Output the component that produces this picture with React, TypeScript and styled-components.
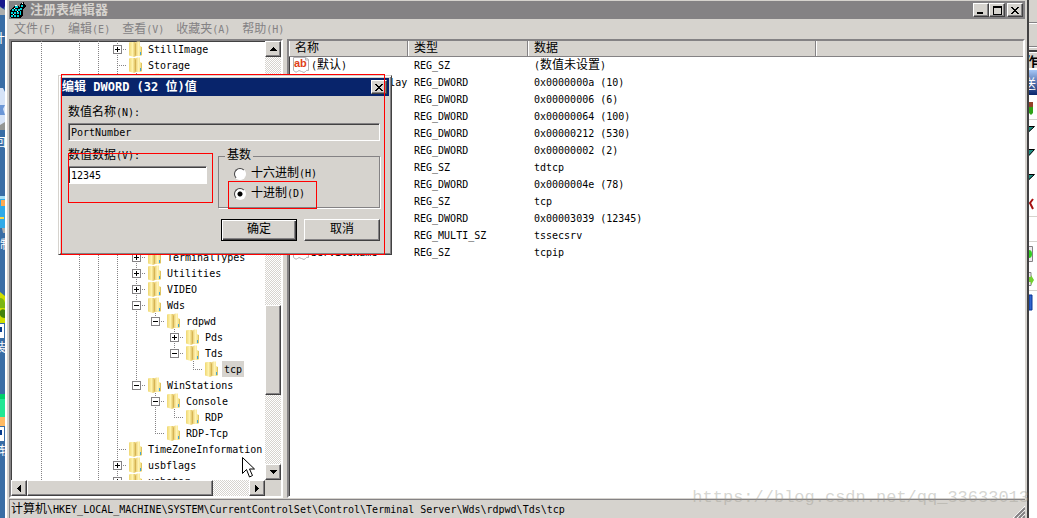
import React, { useState } from 'react';
import styled, { createGlobalStyle, css } from 'styled-components';

const face = '#d6d3ce';
const shade = '#848284';
const dark = '#424142';
const navy = '#08246b';
const mark = '#ff0000';

const GlobalStyle = createGlobalStyle`
  * { box-sizing: border-box; }
  body {
    margin: 0;
    background: ${face};
    color: #000;
    font-family: "DejaVu Sans Mono", "Noto Sans CJK SC", monospace;
    font-size: 10px;
    line-height: 16px;
    overflow: hidden;
  }
  button, input { font: inherit; color: inherit; margin: 0; border-radius: 0; }
`;

const Han = styled.span`
  font-family: "Noto Sans CJK SC", sans-serif;
  font-size: 12px;
  line-height: 1;
`;

/* Chinese runs are set at 12px beside half-width 6px Latin cells. */
function Mixed({ text }: { text: string }) {
  return (
    <>
      {text.split(/([\u4e00-\u9fff]+)/).map((part, i) =>
        i % 2 ? <Han key={i}>{part}</Han> : <React.Fragment key={i}>{part}</React.Fragment>,
      )}
    </>
  );
}

const raised = css`
  background: ${face};
  border: 1px solid;
  border-color: #fff ${dark} ${dark} #fff;
  box-shadow: inset -1px -1px 0 ${shade};
`;

const sunken = css`
  border: 2px solid;
  border-color: ${shade} #fff #fff ${shade};
  box-shadow: inset 1px 1px 0 ${dark};
`;

const Screen = styled.div`
  display: flex;
  height: 100vh;
  position: relative;
  overflow: hidden;
`;

const Strip = styled.div<{ $width: number; $color: string }>`
  flex: 0 0 ${p => p.$width}px;
  background: ${p => p.$color};
  overflow: hidden;
  svg { display: block; }
`;

const Window = styled.main`
  flex: 1;
  min-width: 0;
  display: flex;
  flex-direction: column;
  background: ${face};
  border-left: 2px solid #fff;
  border-right: 2px solid ${dark};
  padding: 1px 2px 0 2px;
`;

const TitleBar = styled.header`
  display: flex;
  align-items: center;
  flex: 0 0 18px;
  gap: 4px;
  padding: 0 2px 0 1px;
  background: ${shade};
  color: ${face};
`;

const Title = styled.h1`
  flex: 1;
  margin: 0;
  font-size: 12px;
  font-weight: 700;
  line-height: 18px;
  span { font-size: 13px; }
`;

const WindowButtons = styled.div`
  display: flex;
`;

const CaptionButton = styled.button<{ $gap?: boolean }>`
  ${raised}
  display: grid;
  place-items: center;
  width: 16px;
  height: 14px;
  padding: 0;
  margin-left: ${p => (p.$gap ? 2 : 0)}px;
`;

const MenuBar = styled.nav`
  display: flex;
  align-items: center;
  flex: 0 0 20px;
  gap: 12px;
  padding: 2px 0 0 5px;
`;

const MenuItem = styled.button`
  border: 0;
  padding: 0;
  background: none;
  color: ${shade};
  line-height: 18px;
  white-space: nowrap;
`;

const Panes = styled.div`
  display: flex;
  flex: 1;
  min-height: 0;
  gap: 4px;
`;

const TreePane = styled.section`
  ${sunken}
  flex: 0 0 274px;
  display: grid;
  grid-template-columns: minmax(0, 1fr) 16px;
  grid-template-rows: minmax(0, 1fr) 16px;
  background: #fff;
`;

const Tree = styled.ul`
  margin: 0;
  padding: 0 0 0 21px;
  list-style: none;
  overflow: hidden;
`;

const TreeRow = styled.li`
  display: flex;
  height: 16px;
  white-space: pre;
`;

const dotsV = 'repeating-linear-gradient(to bottom, #848284 0 1px, transparent 1px 2px)';
const dotsH = 'repeating-linear-gradient(to right, #848284 0 1px, transparent 1px 2px)';

const Guide = styled.span<{ $kind: string }>`
  flex: 0 0 19px;
  display: grid;
  place-items: center;
  background-repeat: no-repeat;
  ${p => p.$kind === '|' && css`background-image: ${dotsV}; background-size: 1px 16px; background-position: 9px 0;`}
  ${p => p.$kind === 'T' && css`
    background-image: ${dotsV}, ${dotsH};
    background-size: 1px 16px, 10px 1px;
    background-position: 9px 0, 9px 8px;
  `}
  ${p => p.$kind === 'L' && css`
    background-image: ${dotsV}, ${dotsH};
    background-size: 1px 8px, 10px 1px;
    background-position: 9px 0, 9px 8px;
  `}
`;

const FolderCell = styled.span`
  flex: 0 0 19px;
  padding-left: 2px;
  svg { display: block; }
`;

const TreeLabel = styled.span<{ $selected?: boolean }>`
  padding: 0 2px;
  line-height: 18px;
  background: ${p => (p.$selected ? face : 'transparent')};
`;

const Track = styled.div<{ $vertical?: boolean }>`
  display: flex;
  flex-direction: ${p => (p.$vertical ? 'column' : 'row')};
  min-width: 0;
  min-height: 0;
  background: repeating-conic-gradient(${face} 0 25%, #fff 0 50%) 0 0 / 2px 2px;
`;

const ArrowButton = styled.button`
  ${raised}
  flex: 0 0 16px;
  display: grid;
  place-items: center;
  padding: 0;
  min-width: 16px;
  min-height: 16px;
`;

const Space = styled.div<{ $grow: number }>`
  flex: ${p => p.$grow} 1 0;
`;

const Thumb = styled.div<{ $grow: number }>`
  ${raised}
  flex: ${p => p.$grow} 1 0;
`;

const Corner = styled.div`
  background: ${face};
`;

const ListPane = styled.section`
  ${sunken}
  flex: 1;
  min-width: 0;
  background: #fff;
  overflow: hidden;
`;

const ValueTable = styled.table`
  width: 100%;
  table-layout: fixed;
  border-collapse: separate;
  border-spacing: 0;
  th {
    height: 15px;
    padding: 0 0 0 6px;
    background: ${face};
    border-right: 1px solid ${shade};
    border-bottom: 1px solid ${shade};
    box-shadow: inset 1px 0 0 #fff;
    font-weight: 400;
    line-height: 14px;
    text-align: left;
  }
  th:last-child { border-right: 0; }
  td {
    height: 17px;
    padding: 0 0 0 6px;
    line-height: 17px;
    white-space: nowrap;
    overflow: hidden;
  }
  td:first-child { padding-left: 4px; }
`;

const ValueName = styled.span`
  display: flex;
  gap: 2px;
  height: 17px;
`;

const StatusBar = styled.footer`
  flex: 0 0 19px;
  display: flex;
  justify-content: space-between;
  align-items: flex-end;
  margin-top: 1px;
  padding-left: 1px;
  border-top: 1px solid ${shade};
  border-left: 1px solid ${shade};
  white-space: nowrap;
  line-height: 17px;
`;

const Dialog = styled.form`
  position: absolute;
  left: 58px;
  top: 75px;
  width: 334px;
  height: 180px;
  padding: 1px;
  ${raised}
  border-color: ${face} ${dark} ${dark} ${face};
  box-shadow: inset 1px 1px 0 #fff, inset -1px -1px 0 ${shade};
`;

const DialogTitle = styled.div`
  display: flex;
  align-items: center;
  justify-content: space-between;
  height: 18px;
  margin: 1px;
  padding: 0 2px 0 1px;
  background: ${navy};
  color: #fff;
  font-size: 12px;
  font-weight: 700;
`;

const DialogBody = styled.div`
  display: flex;
  flex-direction: column;
  padding: 8px 10px 0 8px;
`;

const Columns = styled.div`
  display: flex;
  justify-content: space-between;
  margin-top: 7px;
`;

const Field = styled.div<{ $width?: number }>`
  display: flex;
  flex-direction: column;
  width: ${p => (p.$width ? `${p.$width}px` : 'auto')};
`;

const FieldLabel = styled.label`
  line-height: 16px;
  margin-bottom: 2px;
`;

const TextInput = styled.input<{ $plain?: boolean }>`
  width: 100%;
  height: 18px;
  padding: 0 2px 0 2px;
  outline: 0;
  border: 1px solid;
  border-color: ${shade} #fff #fff ${shade};
  box-shadow: inset 1px 1px 0 ${dark};
  background: ${p => (p.$plain ? face : '#fff')};
`;

const BaseGroup = styled.fieldset`
  width: 162px;
  height: 60px;
  margin: 0;
  min-width: 0;
  padding: 0 0 0 15px;
  border: 1px solid ${shade};
  box-shadow: 1px 1px 0 #fff;
  legend {
    margin-left: -9px;
    padding: 0 2px;
    line-height: 16px;
  }
`;

const RadioLabel = styled.label`
  display: flex;
  align-items: center;
  gap: 5px;
  height: 20px;
`;

const Radio = styled.input`
  appearance: none;
  width: 12px;
  height: 12px;
  border: 1px solid;
  border-color: ${dark} #fff #fff ${dark};
  border-radius: 50%;
  background: #fff;
  &:checked { background: radial-gradient(circle, #000 0 2px, #fff 3px); }
`;

const Actions = styled.div`
  display: flex;
  justify-content: flex-end;
  gap: 7px;
  margin-top: 11px;
`;

const PushButton = styled.button<{ $primary?: boolean }>`
  ${raised}
  width: 76px;
  height: 22px;
  padding: 0;
  ${p => p.$primary && css`
    border-color: #000;
    box-shadow: inset 1px 1px 0 #fff, inset -1px -1px 0 ${dark}, inset -2px -2px 0 ${shade};
  `}
`;

const RedFrame = styled.div<{ $x: number; $y: number; $w: number; $h: number }>`
  position: absolute;
  left: ${p => p.$x}px;
  top: ${p => p.$y}px;
  width: ${p => p.$w}px;
  height: ${p => p.$h}px;
  border: 1px solid ${mark};
  pointer-events: none;
`;

const Pointer = styled.svg`
  position: absolute;
  left: 242px;
  top: 457px;
`;

const Watermark = styled.div`
  position: absolute;
  right: 8px;
  bottom: 8px;
  font-family: "Liberation Mono", monospace;
  font-size: 17px;
  line-height: 24px;
  color: rgba(150, 150, 140, 0.4);
  pointer-events: none;
`;

function Arrow({ dir }: { dir: 'up' | 'down' | 'left' | 'right' }) {
  const d = {
    up: 'M3 0h1v1h1v1h1v1h1v1H0V3h1V2h1V1h1z',
    down: 'M0 0h7v1H6v1H5v1H4v1H3V3H2V2H1V1H0z',
    left: 'M4 0v7H3V6H2V5H1V4H0V3h1V2h1V1h1V0z',
    right: 'M0 0h1v1h1v1h1v1h1v1H3v1H2v1H1v1H0z',
  }[dir];
  const tall = dir === 'left' || dir === 'right';
  return (
    <svg width={tall ? 4 : 7} height={tall ? 7 : 4} shapeRendering="crispEdges">
      <path d={d} />
    </svg>
  );
}

function CloseGlyph() {
  return (
    <svg width="8" height="7" shapeRendering="crispEdges">
      <path d="M0 0h2v1h1v1h2V1h1V0h2v1H7v1H6v1H5v1h1v1h1v1h1v1H6V6H5V5H3v1H2v1H0V6h1V5h1V4h1V3H2V2H1V1H0z" />
    </svg>
  );
}

function Folder() {
  return (
    <svg width="14" height="16" viewBox="0 0 14 16">
      <defs>
        <linearGradient id="folderBack" x1="0" x2="1">
          <stop offset="0" stopColor="#efd773" />
          <stop offset="0.5" stopColor="#fff3ad" />
          <stop offset="1" stopColor="#d6b24a" />
        </linearGradient>
        <linearGradient id="folderFront" x1="0" x2="1">
          <stop offset="0" stopColor="#e7c763" />
          <stop offset="0.5" stopColor="#fff3b5" />
          <stop offset="1" stopColor="#efd76b" />
        </linearGradient>
      </defs>
      <path d="M0 1.500 2 1h4l1 1v13l-2 1-5-1.500z" fill="url(#folderBack)" />
      <path d="M6 2l2-1.500h3V5l2 1v8l-1 1H6z" fill="url(#folderFront)" />
      <path d="M6.500 2.500v12" stroke="#c6a242" strokeOpacity="0.6" />
      <path d="M12.500 6v8" stroke="#dec363" />
      <path d="M11.500 11v3" stroke="#42a6d8" />
    </svg>
  );
}

function Expander({ open }: { open: boolean }) {
  return (
    <svg width="9" height="9" shapeRendering="crispEdges">
      <path d="M0 0h9v9H0z" fill={shade} />
      <path d="M1 1h7v7H1z" fill="#fff" />
      <path d={open ? 'M2 4h5v1H2z' : 'M2 4h5v1H2zM4 2h1v5H4z'} />
    </svg>
  );
}

function StringIcon() {
  return (
    <svg width="16" height="16" viewBox="0 0 16 16">
      <path d="M0.500 0.500h12l3 2v11q-2-1-3 1t-4 0-4 0-4-1z" fill="#fff" stroke="#b5b2b5" />
      <path d="M12.500 0.500v2.500h3" fill="none" stroke="#b5b2b5" />
      <text x="1" y="10" fontFamily="Liberation Sans, sans-serif" fontWeight="700" fontSize="11" fill="#de4118">ab</text>
    </svg>
  );
}

function RegeditIcon() {
  return (
    <svg width="16" height="16" viewBox="0 0 16 16" shapeRendering="crispEdges">
      <path d="M1 7l4-4 3 1 2 2V4l1-3 3-1 1 3 1 1-2 2-1 2v5l-3 3H1L0 14V9z" fill="#000" />
      <path d="M5 4h3v2H5zM2 7h2v2H2zM5 7h2v2H5zM8 7h2v2H8zM1 10h2v2H1zM4 10h2v2H4zM7 10h2v2H7zM1 13h2v2H1zM4 13h2v2H4zM7 13h2v2H7zM11 3h2v2h-2zM10 6h2v2h-2zM10 9h1v4h-1z" fill="#00d7de" />
      <path d="M5 3h2v1H5zM4 6h1v1H4zM7 9h1v1H7zM3 12h1v1H3zM12 1h1v1h-1z" fill="#fff" />
    </svg>
  );
}

/* The slice of desktop icons left of the window. */
function DesktopSlice() {
  return (
    <svg width="5" height="518" fontFamily="Noto Sans CJK SC, sans-serif" fontSize="12" fill="#fff">
      <path d="M0 0h5v6L3 9 0 6z" fill="#18188c" />
      <path d="M0 7l5 3v5H0z" fill="#adaead" />
      <text x="-7" y="43">计</text>
      <path d="M0 88h3l2 4v32l-5 5z" fill="#d6e3f7" />
      <path d="M0 105h5l-2 4 2 6H0z" fill="#6b96d6" />
      <path d="M0 125l5-3v8H0z" fill="#949694" />
      <text x="-6" y="147">回</text>
      <path d="M0 196h5v32H0z" fill="#31aae7" />
      <path d="M0 196h5v3H0z" fill="#a5dff7" />
      <path d="M1 200h4v6H1z" fill="#ffaa52" />
      <path d="M0 217h4v2H0z" fill="#ffdb42" />
      <path d="M2 228h3v5H3z" fill="#adaead" />
      <text x="0" y="249">制</text>
      <path d="M0 292l5 4v27H0z" fill="#cede00" />
      <path d="M0 298q4 0 5 5v5H0z" fill="#7bb610" />
      <path d="M0 311q2-3 5-1v8q-4 0-5-3z" fill="#42820c" />
      <path d="M0 324h4v14H0z" />
      <path d="M0 327h2v5H0z" fill="#083c8c" />
      <text x="-6" y="352">装</text>
      <path d="M0 394h5v24H0z" fill="#21e794" />
      <path d="M0 394h5v5H0z" fill="#00cf6b" />
      <path d="M0 417h5v9H0z" fill="#ffba63" />
      <path d="M0 427h4v14H0z" />
      <path d="M0 430h2v5H0z" fill="#083c8c" />
      <text x="-1" y="455">软</text>
    </svg>
  );
}

/* The edge of the actions panel that shows right of the window. */
function ActionsSlice() {
  return (
    <svg width="8" height="518">
      <defs>
        <linearGradient id="actionsHead" x2="0" y2="1">
          <stop offset="0" stopColor="#a5c7f7" />
          <stop offset="1" stopColor="#08246b" />
        </linearGradient>
      </defs>
      <path d="M0 0h8v52H0z" fill={face} />
      <path d="M0 22h8v1H0zM0 46h8v1H0z" fill={shade} />
      <path d="M0 23h8v1H0zM0 47h8v1H0z" fill="#fff" />
      <path d="M0 50h8v2H0z" fill={dark} />
      <path d="M0 53h8v15H0z" fill={face} />
      <text x="-4" y="66" fontFamily="Noto Sans CJK SC, sans-serif" fontSize="13" fontWeight="700">作</text>
      <path d="M0 70h8v25H0z" fill="url(#actionsHead)" />
      <text x="-6" y="88" fontFamily="Noto Sans CJK SC, sans-serif" fontSize="13" fill="#fff">送</text>
      <path d="M0 102h4v5H0z" fill="#944129" />
      <path d="M0 107h4v6l-2 2-2-2z" fill="#31a218" />
      <path d="M0 119h8v1H0zM0 216h8v1H0zM0 241h8v1H0zM0 290h8v1H0z" fill={face} />
      <path d="M0 127h5l-5 5zM0 150h5l-5 6zM0 175h5l-5 5z" fill="#218e84" />
      <path d="M0 126.500h5.500l-5.500 5M0 149.500h5.500l-5.500 6M0 174.500h5.500l-5.500 5" fill="none" stroke="#000" />
      <path d="M4 199L1 203l3 6" fill="none" stroke="#a51010" strokeWidth="2" />
      <path d="M0 246.500h3.500v15H0" fill="#efebef" stroke="#848284" />
      <path d="M0 250q3 0 3 4t-3 4z" fill="#31cf21" />
      <path d="M0 272.500h2v13H0" fill="#efebef" stroke="#848284" />
      <path d="M0 277h2v-2l3 5-3 5v-3H0z" fill="#73cf31" />
      <path d="M0 295h3v15H0z" fill="#3165ce" stroke="#083494" />
    </svg>
  );
}

/* Guides: "|" line, "T" branch, "L" last branch, "+"/"-" branch with box, "p"/"m" last branch with box. */
type Node = [guides: string, label: string];
const covered: Node[] = Array.from({ length: 11 }, () => ['| |||T', '']);
const nodes: Node[] = [
  ['| ||+', 'StillImage'],
  ['| ||T', 'Storage'],
  ...covered,
  ['| |||+', 'TerminalTypes'],
  ['| |||+', 'Utilities'],
  ['| |||+', 'VIDEO'],
  ['| |||-', 'Wds'],
  ['| ||||m', 'rdpwd'],
  ['| |||| +', 'Pds'],
  ['| |||| m', 'Tds'],
  ['| ||||  L', 'tcp'],
  ['| |||m', 'WinStations'],
  ['| ||| -', 'Console'],
  ['| ||| |L', 'RDP'],
  ['| ||| L', 'RDP-Tcp'],
  ['| ||T', 'TimeZoneInformation'],
  ['| ||+', 'usbflags'],
  ['| ||+', 'usbstor'],
];

const values: [string, string, string][] = [
  ['(默认)', 'REG_SZ', '(数值未设置)'],
  ['InteractiveDelay', 'REG_DWORD', '0x0000000a (10)'],
  ['', 'REG_DWORD', '0x00000006 (6)'],
  ['', 'REG_DWORD', '0x00000064 (100)'],
  ['', 'REG_DWORD', '0x00000212 (530)'],
  ['', 'REG_DWORD', '0x00000002 (2)'],
  ['', 'REG_SZ', 'tdtcp'],
  ['', 'REG_DWORD', '0x0000004e (78)'],
  ['', 'REG_SZ', 'tcp'],
  ['', 'REG_DWORD', '0x00003039 (12345)'],
  ['', 'REG_MULTI_SZ', 'tssecsrv'],
  ['ServiceName', 'REG_SZ', 'tcpip'],
];

function TreeNode({ node: [guides, label] }: { node: Node }) {
  return (
    <TreeRow>
      {guides.split('').map((g, i) => {
        const boxed = '+-pm'.includes(g);
        const kind = boxed ? ('pm'.includes(g) ? 'L' : 'T') : g;
        return (
          <Guide key={i} $kind={kind}>
            {boxed && <Expander open={g === '-' || g === 'm'} />}
          </Guide>
        );
      })}
      <FolderCell><Folder /></FolderCell>
      <TreeLabel $selected={label === 'tcp'}>{label}</TreeLabel>
    </TreeRow>
  );
}

export default function App() {
  const [data, setData] = useState('12345');
  const [base, setBase] = useState('dec');

  return (
    <Screen>
      <GlobalStyle />
      <Strip $width={5} $color="#396da5"><DesktopSlice /></Strip>
      <Window>
        <TitleBar>
          <RegeditIcon />
          <Title><Mixed text="注册表编辑器" /></Title>
          <WindowButtons>
            <CaptionButton aria-label="最小化">
              <svg width="10" height="8"><path d="M1 6h6v2H1z" /></svg>
            </CaptionButton>
            <CaptionButton aria-label="最大化">
              <svg width="9" height="9" shapeRendering="crispEdges"><path fillRule="evenodd" d="M0 0h9v9H0zM1 2v6h7V2z" /></svg>
            </CaptionButton>
            <CaptionButton $gap aria-label="关闭"><CloseGlyph /></CaptionButton>
          </WindowButtons>
        </TitleBar>
        <MenuBar>
          {['文件(F)', '编辑(E)', '查看(V)', '收藏夹(A)', '帮助(H)'].map(m => (
            <MenuItem key={m}><Mixed text={m} /></MenuItem>
          ))}
        </MenuBar>
        <Panes>
          <TreePane>
            <Tree>
              {nodes.map((n, i) => <TreeNode key={i} node={n} />)}
            </Tree>
            <Track $vertical>
              <ArrowButton aria-label="向上"><Arrow dir="up" /></ArrowButton>
              <Space $grow={249} />
              <Thumb $grow={89} />
              <Space $grow={69} />
              <ArrowButton aria-label="向下"><Arrow dir="down" /></ArrowButton>
            </Track>
            <Track>
              <ArrowButton aria-label="向左"><Arrow dir="left" /></ArrowButton>
              <Thumb $grow={186} />
              <Space $grow={36} />
              <ArrowButton aria-label="向右"><Arrow dir="right" /></ArrowButton>
            </Track>
            <Corner />
          </TreePane>
          <ListPane>
            <ValueTable>
              <colgroup>
                <col style={{ width: 119 }} />
                <col style={{ width: 120 }} />
                <col style={{ width: 288 }} />
                <col />
              </colgroup>
              <thead>
                <tr>
                  <th><Mixed text="名称" /></th>
                  <th><Mixed text="类型" /></th>
                  <th><Mixed text="数据" /></th>
                  <th />
                </tr>
              </thead>
              <tbody>
                {values.map(([name, type, value], i) => (
                  <tr key={i}>
                    <td><ValueName><StringIcon /><span><Mixed text={name} /></span></ValueName></td>
                    <td>{type}</td>
                    <td><Mixed text={value} /></td>
                    <td />
                  </tr>
                ))}
              </tbody>
            </ValueTable>
          </ListPane>
        </Panes>
        <StatusBar>
          <span>
            <Mixed text="计算机\HKEY_LOCAL_MACHINE\SYSTEM\CurrentControlSet\Control\Terminal Server\Wds\rdpwd\Tds\tcp" />
          </span>
          <svg width="12" height="12">
            <path d="M0 12L12 0M4 12l8-8M8 12l4-4" stroke="#fff" />
            <path d="M2 12L12 2M6 12l6-6M10 12l2-2" stroke={shade} strokeWidth="2" />
          </svg>
        </StatusBar>
      </Window>
      <Strip $width={8} $color="#fff"><ActionsSlice /></Strip>

      <Dialog onSubmit={e => e.preventDefault()}>
        <DialogTitle>
          <span><Mixed text="编辑 DWORD (32 位)值" /></span>
          <CaptionButton type="button" aria-label="关闭"><CloseGlyph /></CaptionButton>
        </DialogTitle>
        <DialogBody>
          <Field>
            <FieldLabel htmlFor="valueName"><Mixed text="数值名称(N):" /></FieldLabel>
            <TextInput id="valueName" $plain readOnly value="PortNumber" />
          </Field>
          <Columns>
            <Field $width={139}>
              <FieldLabel htmlFor="valueData"><Mixed text="数值数据(V):" /></FieldLabel>
              <TextInput id="valueData" value={data} onChange={e => setData(e.target.value)} />
            </Field>
            <BaseGroup>
              <legend><Mixed text="基数" /></legend>
              <RadioLabel>
                <Radio type="radio" name="base" checked={base === 'hex'} onChange={() => setBase('hex')} />
                <span><Mixed text="十六进制(H)" /></span>
              </RadioLabel>
              <RadioLabel>
                <Radio type="radio" name="base" checked={base === 'dec'} onChange={() => setBase('dec')} />
                <span><Mixed text="十进制(D)" /></span>
              </RadioLabel>
            </BaseGroup>
          </Columns>
          <Actions>
            <PushButton $primary type="submit"><Mixed text="确定" /></PushButton>
            <PushButton type="button"><Mixed text="取消" /></PushButton>
          </Actions>
        </DialogBody>
      </Dialog>

      <RedFrame $x={61} $y={74} $w={324} $h={181} />
      <RedFrame $x={68} $y={153} $w={145} $h={50} />
      <RedFrame $x={228} $y={181} $w={89} $h={28} />
      <Pointer width="13" height="21">
        <path d="M0.500 0.500v16l4-4 3 7.500 3-1.500-3-6.500h5z" fill="#fff" stroke="#000" />
      </Pointer>
      <Watermark>https://blog.csdn.net/qq_33633013</Watermark>
    </Screen>
  );
}
